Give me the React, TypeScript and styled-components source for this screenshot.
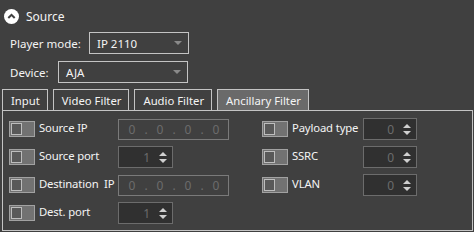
import React from "react";
import styled, { createGlobalStyle } from "styled-components";

const Global = createGlobalStyle`
  html, body { margin: 0; padding: 0; background: #404040; }
  body {
    font-family: "Noto Sans", "Open Sans", sans-serif;
    font-size: 11px;
    color: #f4f4f4;
  }
`;

const Page = styled.div`
  width: 474px;
  height: 232px;
  box-sizing: border-box;
  display: flex;
  flex-direction: column;
  background: #404040;
  overflow: hidden;
`;

const Header = styled.div`
  display: flex;
  align-items: center;
  gap: 7px;
  height: 15px;
  margin: 9px 0 0 4px;
  font-size: 12px;
`;

const CollapseIcon = styled.svg`
  width: 15px;
  height: 15px;
  flex: none;
`;

const FormRow = styled.div<{ $top: number }>`
  display: flex;
  align-items: center;
  height: 22px;
  margin-top: ${(p) => p.$top}px;
  padding-left: 10px;
`;

const FormLabel = styled.span<{ $w: number }>`
  width: ${(p) => p.$w}px;
  flex: none;
  font-size: 11.5px;
`;

const Combo = styled.div<{ $w: number }>`
  width: ${(p) => p.$w}px;
  height: 22px;
  box-sizing: border-box;
  border: 1px solid #c4c4c4;
  display: flex;
  align-items: center;
  justify-content: space-between;
  padding: 0 4px 0 7px;
  font-size: 11.5px;
`;

const ComboArrow = styled.span`
  width: 0;
  height: 0;
  border-left: 4px solid transparent;
  border-right: 4px solid transparent;
  border-top: 4px solid #8a8a8a;
  margin-right: 2px;
`;

const TabBar = styled.div`
  display: flex;
  gap: 5px;
  margin: 6px 0 0 2px;
  height: 21px;
`;

const Tab = styled.div<{ $active?: boolean }>`
  height: 21px;
  box-sizing: border-box;
  border: 1px solid #c4c4c4;
  border-bottom: none;
  background: ${(p) => (p.$active ? "#6a6a6a" : "#404040")};
  padding: 0 7px 0 8px;
  display: flex;
  align-items: center;
  font-size: 11.3px;
`;

const Pane = styled.div`
  margin-left: 2px;
  width: 471px;
  height: 121px;
  box-sizing: border-box;
  border: 1px solid #c4c4c4;
  padding: 7px 0 0 6px;
  display: grid;
  grid-template-columns: 253px 1fr;
`;

const Column = styled.div`
  display: flex;
  flex-direction: column;
  gap: 6px;
`;

const Row = styled.div`
  display: flex;
  align-items: center;
  height: 22px;
`;

const Toggle = styled.div`
  width: 26px;
  height: 16px;
  box-sizing: border-box;
  border: 1px solid #a2a2a2;
  background: #727272;
  display: flex;
  align-items: center;
  padding-left: 1px;
  flex: none;
`;

const Knob = styled.div`
  width: 11px;
  height: 12px;
  box-sizing: border-box;
  border: 1px solid #bdbdbd;
  background: #595959;
`;

const RowLabel = styled.span<{ $w: number }>`
  width: ${(p) => p.$w}px;
  margin-left: 4px;
  flex: none;
  white-space: pre;
  font-size: 11.3px;
  letter-spacing: -0.15px;
  margin-top: -3px;
`;

const IpField = styled.div`
  width: 111px;
  height: 21px;
  box-sizing: border-box;
  border: 1px solid #7a7a7a;
  display: flex;
  align-items: center;
  padding-left: 1px;
  color: #6c6c6c;
  font-size: 12px;
`;

const Octet = styled.span`
  width: 24px;
  text-align: center;
`;

const Dot = styled.span`
  width: 4px;
  text-align: center;
`;

const Spin = styled.div<{ $w: number }>`
  width: ${(p) => p.$w}px;
  height: 22px;
  box-sizing: border-box;
  border: 1px solid #6c6c6c;
  background: #303030;
  display: flex;
  align-items: center;
  justify-content: flex-end;
  color: #6c6c6c;
  font-size: 12px;
  padding-right: 4px;
  gap: 9px;
`;

const Arrows = styled.div`
  display: flex;
  flex-direction: column;
  gap: 3px;
  margin-right: 1px;
`;

const Up = styled.span`
  width: 0;
  height: 0;
  border-left: 4px solid transparent;
  border-right: 4px solid transparent;
  border-bottom: 4px solid #cfcfcf;
`;

const Down = styled.span`
  width: 0;
  height: 0;
  border-left: 4px solid transparent;
  border-right: 4px solid transparent;
  border-top: 4px solid #cfcfcf;
`;

const Switch = () => (
  <Toggle>
    <Knob />
  </Toggle>
);

const Ip = () => (
  <IpField>
    <Octet>0</Octet>
    <Dot>.</Dot>
    <Octet>0</Octet>
    <Dot>.</Dot>
    <Octet>0</Octet>
    <Dot>.</Dot>
    <Octet>0</Octet>
  </IpField>
);

const SpinBox = ({ value, w }: { value: string; w: number }) => (
  <Spin $w={w}>
    <span>{value}</span>
    <Arrows>
      <Up />
      <Down />
    </Arrows>
  </Spin>
);

export default function App() {
  return (
    <Page>
      <Global />
      <Header>
        <CollapseIcon viewBox="0 0 15 15">
          <circle cx="7.5" cy="7.5" r="7.5" fill="#ffffff" />
          <path d="M4.3 9 L7.5 5.8 L10.7 9" fill="none" stroke="#404040" strokeWidth="2" />
        </CollapseIcon>
        <span>Source</span>
      </Header>
      <FormRow $top={8}>
        <FormLabel $w={79}>Player mode:</FormLabel>
        <Combo $w={100}>
          <span>IP 2110</span>
          <ComboArrow />
        </Combo>
      </FormRow>
      <FormRow $top={7}>
        <FormLabel $w={48}>Device:</FormLabel>
        <Combo $w={130}>
          <span>AJA</span>
          <ComboArrow />
        </Combo>
      </FormRow>
      <TabBar>
        <Tab>Input</Tab>
        <Tab>Video Filter</Tab>
        <Tab>Audio Filter</Tab>
        <Tab $active>Ancillary Filter</Tab>
      </TabBar>
      <Pane>
        <Column>
          <Row>
            <Switch />
            <RowLabel $w={79}>Source IP</RowLabel>
            <Ip />
          </Row>
          <Row>
            <Switch />
            <RowLabel $w={79}>Source port</RowLabel>
            <SpinBox value="1" w={55} />
          </Row>
          <Row>
            <Switch />
            <RowLabel $w={79}>{"Destination  IP"}</RowLabel>
            <Ip />
          </Row>
          <Row>
            <Switch />
            <RowLabel $w={79}>Dest. port</RowLabel>
            <SpinBox value="1" w={55} />
          </Row>
        </Column>
        <Column>
          <Row>
            <Switch />
            <RowLabel $w={71}>Payload type</RowLabel>
            <SpinBox value="0" w={54} />
          </Row>
          <Row>
            <Switch />
            <RowLabel $w={71}>SSRC</RowLabel>
            <SpinBox value="0" w={54} />
          </Row>
          <Row>
            <Switch />
            <RowLabel $w={71}>VLAN</RowLabel>
            <SpinBox value="0" w={54} />
          </Row>
        </Column>
      </Pane>
    </Page>
  );
}
